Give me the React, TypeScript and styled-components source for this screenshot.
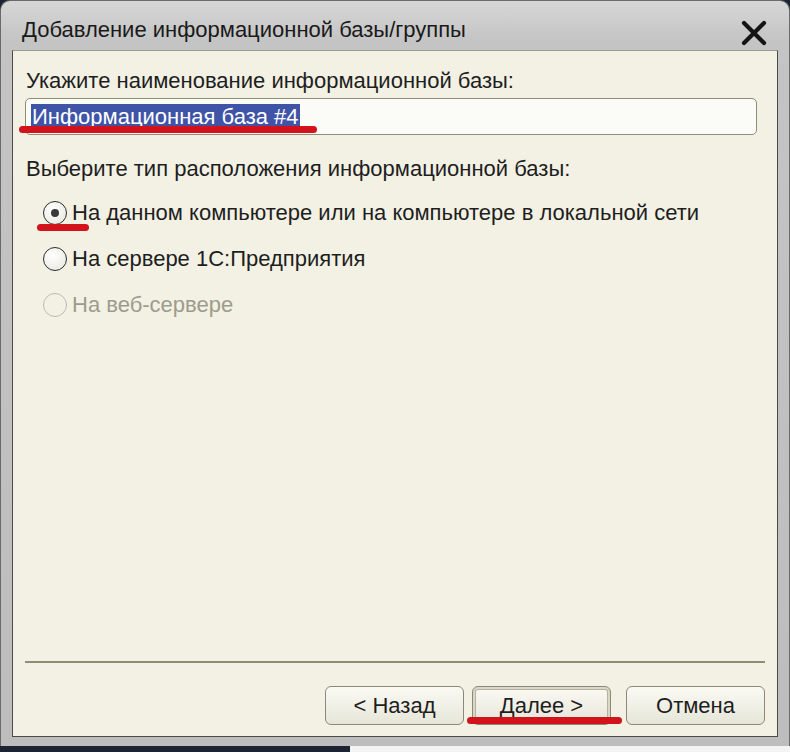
import React from "react";
import styled, { createGlobalStyle } from "styled-components";

const Global = createGlobalStyle`
  html, body { margin: 0; padding: 0; background: #1c2433; }
  body { width: 790px; height: 752px; overflow: hidden; font-family: "Liberation Sans", Arial, sans-serif; }
`;

const Window = styled.div`
  position: relative;
  width: 790px;
  height: 746px;
  box-sizing: border-box;
  display: flex;
  flex-direction: column;
  background: linear-gradient(180deg, #d6d6d6 0px, #c4c4c4 40px, #bdbdbd 100%);
  border-radius: 10px 10px 0 0;
  border: 1px solid #6a6a6a;
  border-bottom: none;
`;

const TitleBar = styled.div`
  height: 49px;
  flex: none;
  display: flex;
  align-items: center;
  justify-content: space-between;
  padding: 8px 21px 0 21px;
  box-sizing: border-box;
`;

const Title = styled.div`
  font-size: 22px;
  color: #1a1a1a;
`;

const Close = styled.svg`
  width: 28px;
  height: 26px;
  margin-top: 6px;
`;

const Client = styled.div`
  flex: 1;
  margin: 0 11px 9px 11px;
  background: #f2f1e4;
  border: 1px solid #4a4a4a;
  border-top-color: #9a9a90;
  display: flex;
  flex-direction: column;
  padding: 18px 20px 11px 12px;
  position: relative;
`;

const Label = styled.div<{ $top?: number }>`
  font-size: 22px;
  line-height: 24px;
  color: #1e1e1e;
  padding-left: 1px;
  margin-top: ${(p) => p.$top ?? 0}px;
`;

const Field = styled.div`
  margin-top: 5px;
  height: 37px;
  box-sizing: border-box;
  border: 1px solid #8e8d78;
  border-radius: 5px;
  background: #fbfbf7;
  display: flex;
  align-items: center;
  padding-left: 5px;
  position: relative;
`;

const Selected = styled.span`
  background: #3f54a6;
  color: #fff;
  font-size: 22px;
  line-height: 26px;
  padding: 0 1px 0 1px;
`;

const Radios = styled.div`
  display: flex;
  flex-direction: column;
  margin-top: 9px;
  padding-left: 18px;
`;

const RadioRow = styled.div<{ $disabled?: boolean }>`
  height: 46px;
  display: flex;
  align-items: center;
  gap: 5px;
  font-size: 22px;
  color: ${(p) => (p.$disabled ? "#9d9c8c" : "#1e1e1e")};
  position: relative;
`;

const Circle = styled.span<{ $disabled?: boolean; $on?: boolean }>`
  width: 24px;
  height: 24px;
  box-sizing: border-box;
  border-radius: 50%;
  border: 1.5px solid ${(p) => (p.$disabled ? "#bdbcae" : "#2c2c2c")};
  background: ${(p) => (p.$disabled ? "#f2f1e4" : "radial-gradient(circle at 40% 35%, #ffffff, #e6e5dc)")};
  display: flex;
  align-items: center;
  justify-content: center;
  flex: none;
  &::after {
    content: "";
    display: ${(p) => (p.$on ? "block" : "none")};
    width: 8px;
    height: 8px;
    border-radius: 50%;
    background: #3a3a3a;
  }
`;

const Spacer = styled.div`
  flex: 1;
`;

const Separator = styled.div`
  height: 2px;
  background: #8f8d73;
  margin-right: -8px;
`;

const Buttons = styled.div`
  display: flex;
  justify-content: flex-end;
  gap: 8px;
  margin-top: 23px;
  margin-right: -8px;
`;

const Button = styled.div<{ $focus?: boolean }>`
  width: 139px;
  height: 39px;
  box-sizing: border-box;
  border: 1px solid #8a897c;
  border-radius: 6px;
  background: linear-gradient(180deg, #fafaf4 0%, #efeee4 60%, #e6e5d8 100%);
  display: flex;
  align-items: center;
  justify-content: center;
  font-size: 22px;
  color: #1e1e1e;
  box-shadow: ${(p) => (p.$focus ? "inset 0 0 0 2px #d9d8c6, inset 0 0 0 3px #b4b3a0" : "none")};
  &:last-child { margin-left: 7px; }
`;

const Mark = styled.span<{ $l: number; $t: number; $w: number }>`
  position: absolute;
  left: ${(p) => p.$l}px;
  top: ${(p) => p.$t}px;
  width: ${(p) => p.$w}px;
  height: 7px;
  border-radius: 4px;
  background: #d3131c;
`;

const BottomStrip = styled.div`
  height: 6px;
  background: linear-gradient(90deg, #1c2433 0, #1c2433 350px, #f4f4f4 350px);
`;

export default function App() {
  return (
    <>
      <Global />
      <Window>
        <TitleBar>
          <Title>Добавление информационной базы/группы</Title>
          <Close viewBox="0 0 28 26">
            <path d="M4 3 L24 23 M24 3 L4 23" stroke="#141414" strokeWidth="4.2" strokeLinecap="round" />
          </Close>
        </TitleBar>
        <Client>
          <Label>Укажите наименование информационной базы:</Label>
          <Field>
            <Selected>Информационная база #4</Selected>
            <Mark $l={-7} $t={27} $w={298} />
          </Field>
          <Label $top={22}>Выберите тип расположения информационной базы:</Label>
          <Radios>
            <RadioRow>
              <Circle $on />
              На данном компьютере или на компьютере в локальной сети
              <Mark $l={-6} $t={34} $w={52} />
            </RadioRow>
            <RadioRow>
              <Circle />
              На сервере 1С:Предприятия
            </RadioRow>
            <RadioRow $disabled>
              <Circle $disabled />
              На веб-сервере
            </RadioRow>
          </Radios>
          <Spacer />
          <Separator />
          <Buttons>
            <Button>&lt; Назад</Button>
            <Button $focus>
              Далее &gt;
            </Button>
            <Button>Отмена</Button>
          </Buttons>
          <Mark $l={454} $t={666} $w={155} />
        </Client>
      </Window>
      <BottomStrip />
    </>
  );
}
